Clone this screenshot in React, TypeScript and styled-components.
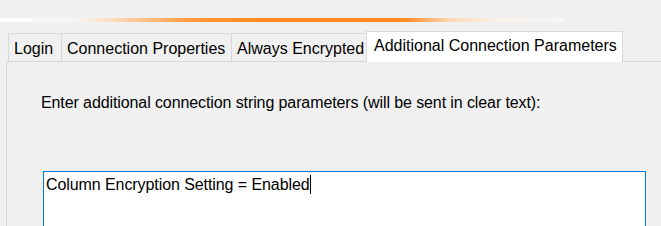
import * as React from "react";
import styled, { createGlobalStyle } from "styled-components";

const GlobalStyle = createGlobalStyle`
  html, body {
    margin: 0;
    padding: 0;
    background: #f0f0f0;
    overflow: hidden;
  }
  body {
    font-family: "Liberation Sans", Arial, sans-serif;
    font-size: 16px;
    color: #000;
  }
`;

const Window = styled.div`
  width: 661px;
  height: 226px;
  display: flex;
  flex-direction: column;
  background: #f0f0f0;
  overflow: hidden;
`;

const Banner = styled.div`
  flex-shrink: 0;
  height: 18px;
`;

const GlowBar = styled.div`
  flex-shrink: 0;
  height: 4px;
  background: linear-gradient(
    to right,
    #ffffff 0,
    #ffffff 31px,
    #f7f7f7 32px,
    #f7f7f7 75px,
    #fcd9b8 115px,
    #ff9a3a 190px,
    #ff8a1f 250px,
    #ff8a1f 405px,
    #fdd8b6 450px,
    #f8f2ec 500px,
    #f7f7f7 565px,
    #f0f0f0 566px,
    #f0f0f0 100%
  );
`;

const TabStrip = styled.div`
  flex-shrink: 0;
  display: flex;
  align-items: flex-end;
  height: 30px;
  margin-top: 9px;
  padding-left: 8px;
  position: relative;
  z-index: 1;
`;

const Tab = styled.div<{ $selected?: boolean; $w: number }>`
  box-sizing: border-box;
  flex-shrink: 0;
  width: ${(p) => p.$w}px;
  height: ${(p) => (p.$selected ? 31 : 28)}px;
  margin-bottom: ${(p) => (p.$selected ? -1 : 0)}px;
  padding: ${(p) => (p.$selected ? "5px 0 0 7px" : "6px 0 0 5px")};
  border: 1px solid #d9d9d9;
  border-right: ${(p) => (p.$selected ? "1px solid #d9d9d9" : "none")};
  border-bottom: none;
  background: ${(p) => (p.$selected ? "#ffffff" : "#f0f0f0")};
  line-height: 18px;
  white-space: nowrap;
  overflow: hidden;
`;

const Panel = styled.div`
  flex: 1 0 auto;
  margin-left: 6px;
  border: 1px solid #d9d9d9;
  border-right: none;
  border-bottom: none;
  padding: 32px 0 0 34px;
  display: flex;
  flex-direction: column;
`;

const Label = styled.div`
  line-height: 18px;
  letter-spacing: -0.1px;
  white-space: nowrap;
`;

const TextBox = styled.div`
  box-sizing: border-box;
  flex-shrink: 0;
  width: 603px;
  height: 80px;
  margin: 59px 0 0 2px;
  padding: 3px 0 0 2px;
  border: 1px solid #0078d7;
  background: #ffffff;
  line-height: 18px;
  letter-spacing: -0.08px;
  white-space: nowrap;
`;

const Caret = styled.span`
  display: inline-block;
  width: 1px;
  height: 19px;
  background: #000;
  vertical-align: -4px;
`;

const tabs = [
  { title: "Login", width: 53 },
  { title: "Connection Properties", width: 170 },
  { title: "Always Encrypted", width: 135 },
  { title: "Additional Connection Parameters", width: 257, selected: true },
];

export default function App() {
  return (
    <>
      <GlobalStyle />
      <Window>
        <Banner />
        <GlowBar />
        <TabStrip>
          {tabs.map((t) => (
            <Tab key={t.title} $w={t.width} $selected={t.selected}>
              {t.title}
            </Tab>
          ))}
        </TabStrip>
        <Panel>
          <Label>
            Enter additional connection string parameters (will be sent in clear text):
          </Label>
          <TextBox>
            Column Encryption Setting = Enabled
            <Caret />
          </TextBox>
        </Panel>
      </Window>
    </>
  );
}
